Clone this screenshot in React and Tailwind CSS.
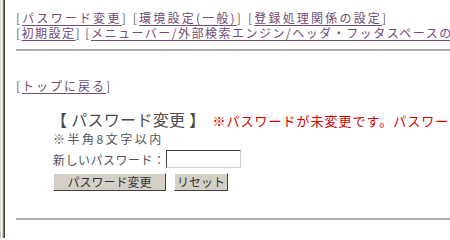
import React from "react";

const L = ({ children }) => (
  <>
    <span className="text-[#666666]">[</span>
    <a href="#" className="text-[#704c76] underline underline-offset-2">{children}</a>
    <span className="text-[#666666]">]</span>
  </>
);

export default function App() {
  return (
    <div className="flex h-[238px] w-[450px] overflow-hidden bg-white" style={{ fontFamily: '"Noto Sans CJK JP", sans-serif' }}>
      <div className="flex h-full shrink-0">
        <div className="w-px bg-[#d4d0c8]" />
        <div className="w-px bg-white" />
        <div className="w-px bg-[#d4d0c8]" />
        <div className="w-px bg-[#808080]" />
        <div className="w-px bg-[#404040]" />
      </div>
      <div className="min-w-0 flex-1 pl-[11px] text-[12px] leading-[15px] tracking-[2px] text-[#555555]">
        <div className="mt-[10px] whitespace-nowrap tracking-[2.2px]">
          <L>パスワード変更</L> <L>環境設定(一般)</L> <L>登録処理関係の設定</L>
        </div>
        <div className="whitespace-nowrap tracking-[1.5px]">
          <L>初期設定</L> <L>メニューバー/外部検索エンジン/ヘッダ・フッタスペースの設定</L>
        </div>
        <div className="mt-[9px] h-[2px] bg-[#aaaaaa]" />
        <div className="mt-[27px] whitespace-nowrap">
          <L>トップに戻る</L>
        </div>
        <div className="ml-[35px] mt-[16px]">
          <div className="flex h-[20px] items-baseline whitespace-nowrap">
            <span className="text-[16px] leading-[20px] tracking-[0.3px] text-[#4a4a4a]">【 パスワード変更 】</span>
            <span className="ml-[7px] text-[13px] tracking-[1px] text-[#cc0000]">※パスワードが未変更です。パスワードを変更してください。</span>
          </div>
          <div className="mt-[2px] ml-[2px] whitespace-nowrap tracking-[2.5px]">※半角8文字以内</div>
          <div className="mt-[4px] ml-[2px] flex items-center whitespace-nowrap">
            <span className="tracking-[0.5px]">新しいパスワード：</span>
            <input
              type="password"
              className="h-[18px] w-[75px] border border-t-[#404040] border-l-[#404040] border-r-[#d4d0c8] border-b-[#d4d0c8] bg-white outline-none"
            />
          </div>
          <div className="mt-[5px] ml-[2px] flex gap-[8px]">
            <button className="h-[18px] w-[113px] border border-t-white border-l-white border-r-[#404040] border-b-[#404040] bg-[#d4d0c8] text-[12px] leading-[16px] tracking-normal text-[#333333]">
              パスワード変更
            </button>
            <button className="h-[18px] w-[54px] border border-t-white border-l-white border-r-[#404040] border-b-[#404040] bg-[#d4d0c8] text-[12px] leading-[16px] tracking-normal text-[#333333]">
              リセット
            </button>
          </div>
        </div>
        <div className="mt-[27px] h-[2px] bg-[#aaaaaa]" />
      </div>
    </div>
  );
}
